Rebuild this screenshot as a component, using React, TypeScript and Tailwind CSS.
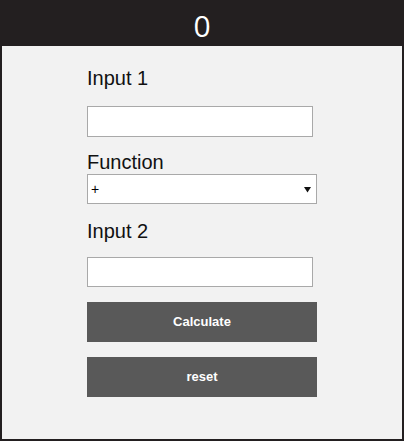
import React from "react";

export default function App() {
  return (
    <div className="w-[404px] h-[441px] bg-[#231f20] flex flex-col px-[2px] pb-[2px] [font-family:'Liberation_Sans',Arial,sans-serif]">
      <div className="h-[46px] shrink-0 flex items-center justify-center text-white text-[30px] leading-none pt-[6px] [font-family:'Open_Sans','Liberation_Sans',sans-serif] font-normal">
        0
      </div>
      <div className="flex-1 bg-[#f2f2f2] flex justify-center">
        <div className="w-[230px] flex flex-col pt-[21px]">
          <label className="text-[20px] leading-[23px] text-[#111]">Input 1</label>
          <input className="mt-[16px] w-[226px] h-[31px] bg-white border border-[#a9a9a9] outline-none" />
          <label className="mt-[14px] text-[20px] leading-[23px] text-[#111]">Function</label>
          <div className="relative w-[230px] h-[30px] bg-white border border-[#a9a9a9] flex items-center pl-[3px] text-[14px] text-black">
            <span>+</span>
            <svg className="absolute right-[5px] top-[11px]" width="7" height="7" viewBox="0 0 7 7">
              <path d="M0 1 L7 1 L3.5 6.5 Z" fill="#111" />
            </svg>
          </div>
          <label className="mt-[16px] text-[20px] leading-[23px] text-[#111]">Input 2</label>
          <input className="mt-[14px] w-[226px] h-[30px] bg-white border border-[#a9a9a9] outline-none" />
          <button className="mt-[15px] w-[230px] h-[40px] bg-[#595959] text-white text-[13px] font-bold">
            Calculate
          </button>
          <button className="mt-[15px] w-[230px] h-[40px] bg-[#595959] text-white text-[13px] font-bold">
            reset
          </button>
        </div>
      </div>
    </div>
  );
}
